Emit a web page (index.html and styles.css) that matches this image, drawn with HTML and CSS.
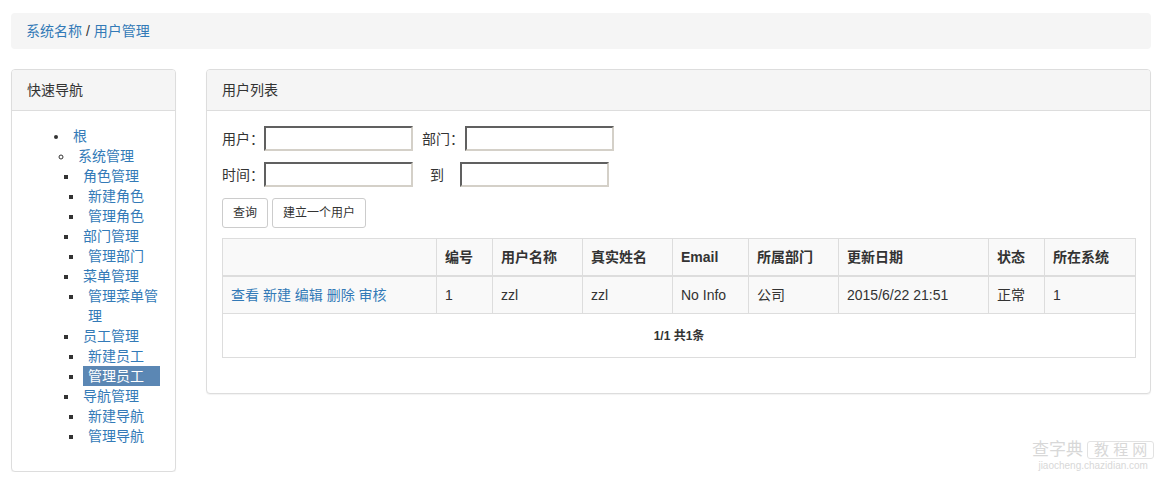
FILE: index.html
```html
<!DOCTYPE html>
<html lang="zh-CN">
<head>
<meta charset="utf-8">
<title>用户管理</title>
<link rel="stylesheet" href="styles.css">
</head>
<body>
<div class="page">
  <div class="breadcrumb"><a href="#">系统名称</a> / <a href="#">用户管理</a></div>
  <div class="row">
    <div class="panel side">
      <div class="panel-heading">快速导航</div>
      <div class="panel-body">
        <ul class="tree">
          <li><a href="#">根</a>
            <ul>
              <li><a href="#">系统管理</a>
                <ul>
                  <li><a href="#">角色管理</a>
                    <ul>
                      <li><a href="#">新建角色</a></li>
                      <li><a href="#">管理角色</a></li>
                    </ul>
                  </li>
                  <li><a href="#">部门管理</a>
                    <ul>
                      <li><a href="#">管理部门</a></li>
                    </ul>
                  </li>
                  <li><a href="#">菜单管理</a>
                    <ul>
                      <li><a href="#">管理菜单管理</a></li>
                    </ul>
                  </li>
                  <li><a href="#">员工管理</a>
                    <ul>
                      <li><a href="#">新建员工</a></li>
                      <li><a href="#" class="active">管理员工</a></li>
                    </ul>
                  </li>
                  <li><a href="#">导航管理</a>
                    <ul>
                      <li><a href="#">新建导航</a></li>
                      <li><a href="#">管理导航</a></li>
                    </ul>
                  </li>
                </ul>
              </li>
            </ul>
          </li>
        </ul>
      </div>
    </div>
    <div class="panel main">
      <div class="panel-heading">用户列表</div>
      <div class="panel-body">
        <div class="form-row">
          <label class="lbl">用户：</label><input class="field" type="text">
          <label class="lbl lbl-dept">部门：</label><input class="field" type="text">
        </div>
        <div class="form-row">
          <label class="lbl">时间：</label><input class="field" type="text">
          <span class="to">到</span><input class="field" type="text">
        </div>
        <div class="btn-row">
          <button class="btn" type="button">查询</button>
          <button class="btn" type="button">建立一个用户</button>
        </div>
        <table class="grid">
          <tbody>
            <tr class="head">
              <th class="c-op"></th>
              <th class="c-id">编号</th>
              <th class="c-user">用户名称</th>
              <th class="c-real">真实姓名</th>
              <th class="c-mail">Email</th>
              <th class="c-dept">所属部门</th>
              <th class="c-date">更新日期</th>
              <th class="c-state">状态</th>
              <th class="c-sys">所在系统</th>
            </tr>
            <tr class="data">
              <td><a href="#">查看</a> <a href="#">新建</a> <a href="#">编辑</a> <a href="#">删除</a> <a href="#">审核</a></td>
              <td>1</td>
              <td>zzl</td>
              <td>zzl</td>
              <td>No Info</td>
              <td>公司</td>
              <td>2015/6/22 21:51</td>
              <td>正常</td>
              <td>1</td>
            </tr>
            <tr class="foot">
              <td colspan="9">1/1 共1条</td>
            </tr>
          </tbody>
        </table>
      </div>
    </div>
  </div>
</div>
<div class="watermark"><span class="wm-top">查字典<span class="wm-box">教 程 网</span></span><span class="wm-bottom">jiaocheng.chazidian.com</span></div>
</body>
</html>
```
FILE: styles.css
```css
* { box-sizing: border-box; }
html, body { margin: 0; padding: 0; background: #fff; }
body {
  font-family: "Liberation Sans", Arial, "Noto Sans CJK SC", sans-serif;
  font-size: 14px;
  line-height: 20px;
  color: #333;
}
a { color: #337ab7; text-decoration: none; }

.page { padding: 13px 14px 0 11px; }

.breadcrumb {
  background: #f5f5f5;
  border-radius: 4px;
  padding: 8px 15px;
  margin-bottom: 20px;
  color: #333;
}

.row {
  display: grid;
  grid-template-columns: 165px 945px;
  column-gap: 30px;
  align-items: start;
}

.panel {
  background: #fff;
  border: 1px solid #ddd;
  border-radius: 4px;
  box-shadow: 0 1px 1px rgba(0,0,0,0.05);
}
.panel-heading {
  background: #f5f5f5;
  border-bottom: 1px solid #ddd;
  border-radius: 3px 3px 0 0;
  padding: 10px 15px;
  color: #333;
}
.panel-body { padding: 15px; }

/* tree */
.tree, .tree ul { margin: 0; }
.tree { padding-left: 42px; margin-bottom: 10px; list-style: disc; }
.tree li { padding-left: 4px; }
.tree ul { padding-left: 1px; }
.tree > li > ul { list-style: circle; }
.tree > li > ul > li > ul { list-style: square; }
.tree > li > ul > li > ul ul { list-style: square; }
.tree .active {
  display: block;
  margin-left: -5px;
  padding-left: 5px;
  background: #5b87b4;
  color: #fff;
}

/* form */
.form-row {
  display: flex;
  align-items: center;
  height: 25px;
  margin-bottom: 11px;
}
.lbl { width: 42px; }
.lbl-dept { margin-left: 9px; width: 43px; }
.field {
  width: 149px;
  height: 25px;
  margin: 0;
  padding: 1px 2px;
  border-style: solid;
  border-width: 2px;
  border-color: #606060 #d4d0c8 #d4d0c8 #606060;
  background: #fff;
  font: inherit;
}
.to { margin-left: 17px; margin-right: 16px; }

.btn-row { display: flex; gap: 4px; margin-bottom: 10px; }
.btn {
  height: 30px;
  padding: 5px 10px;
  font-family: inherit;
  font-size: 12px;
  line-height: 18px;
  color: #333;
  background: #fff;
  border: 1px solid #ccc;
  border-radius: 3px;
}

/* table */
.grid {
  width: 913px;
  border-collapse: collapse;
  margin-bottom: 20px;
  table-layout: fixed;
}
.grid th, .grid td {
  border: 1px solid #ddd;
  padding: 8px;
  line-height: 20px;
  text-align: left;
  vertical-align: top;
}
.grid th { font-weight: bold; border-bottom-width: 2px; }
.grid .head, .grid .data { background: #f9f9f9; }
.grid .foot td {
  text-align: center;
  font-size: 12px;
  font-weight: bold;
  padding: 12px 8px 11px;
}
.c-op { width: 214px; }
.c-id { width: 56px; }
.c-user { width: 90px; }
.c-real { width: 90px; }
.c-mail { width: 76px; }
.c-dept { width: 90px; }
.c-date { width: 150px; }
.c-state { width: 56px; }
.c-sys { width: 91px; }

/* watermark */
.watermark {
  position: absolute;
  left: 1032px;
  top: 440px;
  display: flex;
  flex-direction: column;
  align-items: center;
  color: #d8d8d8;
  pointer-events: none;
}
.wm-top { font-size: 17px; line-height: 20px; display: flex; align-items: center; }
.wm-box {
  margin-left: 4px;
  padding: 0 6px;
  border: 1px solid #e2e2e2;
  border-radius: 3px;
  font-size: 15px;
  line-height: 16px;
}
.wm-bottom { font-size: 10px; line-height: 12px; }
```
